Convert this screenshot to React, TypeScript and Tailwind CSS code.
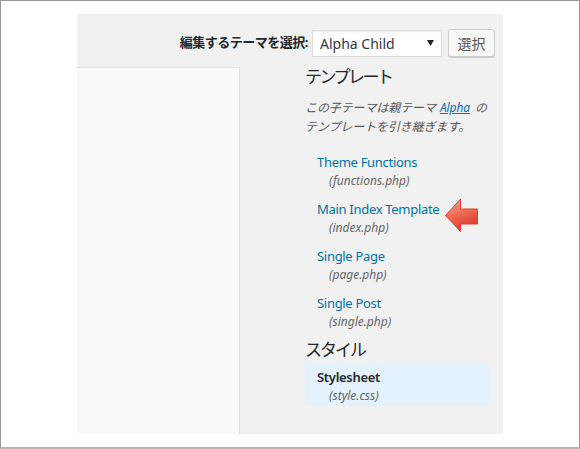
import React from "react";

const items = [
  { name: "Theme Functions", file: "(functions.php)" },
  { name: "Main Index Template", file: "(index.php)" },
  { name: "Single Page", file: "(page.php)" },
  { name: "Single Post", file: "(single.php)" },
];

function Arrow() {
  return (
    <svg width="36" height="36" viewBox="0 0 36 36" className="absolute left-[443px] top-[196px]">
      <defs>
        <linearGradient id="ag" x1="0" y1="0" x2="0.4" y2="1">
          <stop offset="0" stopColor="#f7a892" />
          <stop offset="0.55" stopColor="#ee6a54" />
          <stop offset="1" stopColor="#de3b2a" />
        </linearGradient>
      </defs>
      <polygon
        points="1.5,18.5 16.5,2 16.5,12 33.5,12 33.5,27 16.5,27 16.5,34.5"
        fill="url(#ag)"
        stroke="#d9432f"
        strokeWidth="1"
        strokeLinejoin="miter"
      />
    </svg>
  );
}

export default function App() {
  const font = { fontFamily: '"Noto Sans", "Noto Sans CJK JP", sans-serif' };
  return (
    <div
      className="relative w-[580px] h-[449px] bg-white border-l border-t border-r border-[#9a9a9a] border-b-2 border-b-[#b4b4b4] overflow-hidden"
      style={font}
    >
      <div className="ml-[76px] mt-[13px] w-[426px] h-[420px] bg-[#f1f1f1] flex flex-col">
        {/* header */}
        <div className="h-[53px] pt-[15px] pr-[8px] flex justify-end items-start">
          <div className="flex items-center h-[28px]">
            <span className="text-[13px] font-bold text-[#23282d] tracking-[-0.5px] mr-[4px]">
              編集するテーマを選択:
            </span>
            <div className="w-[130px] h-[27px] bg-white border border-[#dddddd] shadow-[inset_0_1px_2px_rgba(0,0,0,0.07)] flex items-center justify-between pl-[7px] pr-[7px]">
              <span className="text-[14px] text-[#32373c]">Alpha Child</span>
              <svg width="7" height="6" viewBox="0 0 7 6">
                <polygon points="0,0 7,0 3.5,6" fill="#222" />
              </svg>
            </div>
            <div className="ml-[6px] w-[47px] h-[28px] bg-[#f7f7f7] border border-[#cccccc] rounded-[3px] shadow-[0_1px_0_#cccccc] flex items-center justify-center text-[14px] text-[#555]">
              選択
            </div>
          </div>
        </div>
        {/* body */}
        <div className="flex flex-1">
          <div className="w-[163px] bg-[#f9f9f9] border-t border-r border-[#e1e1e1]" />
          <div className="ml-[65px] w-[184px] flex flex-col">
            <div className="h-[20px] leading-[20px] text-[17px] tracking-[-2.5px] text-[#23282d]">テンプレート</div>
            <div className="mt-[11px] text-[12px] leading-[19px] italic text-[#555] tracking-[-0.1px]">
              この子テーマは親テーマ<span className="ml-[4px] mr-[5px] text-[#0073aa] underline">Alpha</span>の
              <br />
              テンプレートを引き継ぎます。
            </div>
            <div className="mt-[13px] flex flex-col">
              {items.map((it) => (
                <div key={it.name} className="pt-[3px] pb-[1px] mb-[5px] pl-[12px]">
                  <div className="text-[13px] leading-[20px] text-[#0073aa] tracking-[-0.3px]">{it.name}</div>
                  <div className="pl-[12px] text-[12px] leading-[18px] italic text-[#666]">{it.file}</div>
                </div>
              ))}
            </div>
            <div className="mt-[3px] h-[20px] leading-[20px] text-[17px] tracking-[-2px] text-[#23282d]">スタイル</div>
            <div className="mt-[4px] pt-[3px] pb-[1px] pl-[12px] bg-[#e4f2fd]">
              <div className="text-[13px] leading-[20px] text-[#23282d] font-semibold tracking-[-0.3px]">Stylesheet</div>
              <div className="pl-[12px] text-[12px] leading-[18px] italic text-[#666]">(style.css)</div>
            </div>
          </div>
        </div>
      </div>
      <Arrow />
    </div>
  );
}
